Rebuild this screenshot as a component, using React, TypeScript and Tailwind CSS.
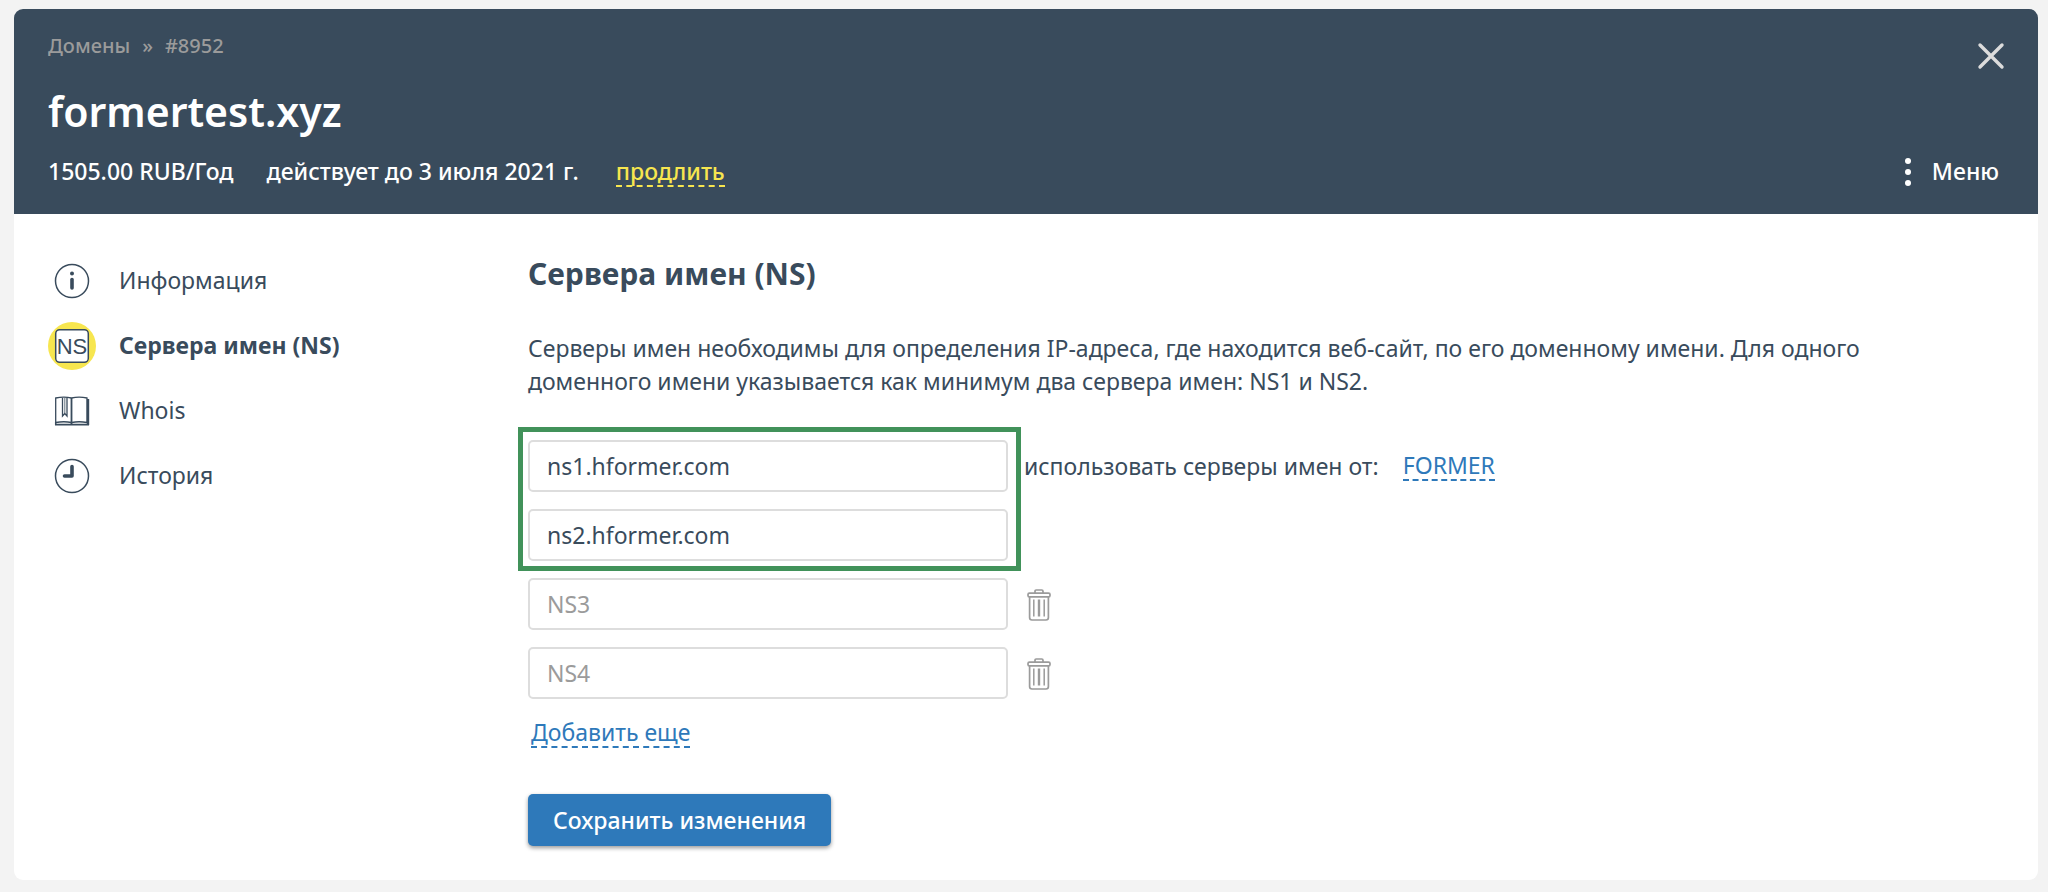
import type { ReactNode } from 'react';

const InfoIcon = () => (
  <svg className="w-9 h-9" viewBox="0 0 36 36" fill="none" stroke="currentColor">
    <circle cx="18" cy="18" r="16.5" strokeWidth="1.5" />
    <circle cx="18" cy="10.5" r="2" fill="currentColor" stroke="none" />
    <path d="M18 16.5v8.5" strokeWidth="3.6" strokeLinecap="round" />
  </svg>
);

const NsIcon = () => (
  <svg className="w-12 h-12" viewBox="0 0 48 48">
    <circle cx="24" cy="24" r="24" fill="#f7e64f" />
    <rect x="7.7" y="7.7" width="32.6" height="32.6" rx="4" fill="#fff" stroke="currentColor" strokeWidth="1.5" />
    <text
      x="24"
      y="32"
      textAnchor="middle"
      fontSize="22"
      fontWeight="400"
      fill="currentColor"
      fontFamily="Liberation Sans, sans-serif"
    >
      NS
    </text>
  </svg>
);

const BookIcon = () => (
  <svg className="w-9 h-9" viewBox="0 0 36 36" fill="none" stroke="currentColor" strokeWidth="1.3">
    <path d="M1.7 5Q10 3.2 17.5 5Q25 3.2 33 5V29.5Q25 28 17.5 29.5Q10 28 1.7 29.5Z" />
    <path d="M17.5 5V31" strokeWidth="1.8" />
    <path d="M1 31.6H35" strokeWidth="1.6" />
    <path d="M1.7 29V32" strokeWidth="1.5" />
    <path d="M34 6V32" strokeWidth="2.4" />
    <path d="M8.5 5V23L10.8 20.5L13 23V5" />
    <path d="M10.8 5V20" strokeWidth="0.8" />
  </svg>
);

const ClockIcon = () => (
  <svg className="w-9 h-9" viewBox="0 0 36 36" fill="none" stroke="currentColor">
    <circle cx="18" cy="18" r="16.5" strokeWidth="1.5" />
    <path d="M18 8.5V18H10.5" strokeWidth="3.6" strokeLinecap="round" strokeLinejoin="round" />
  </svg>
);

const TrashIcon = () => (
  <svg className="w-6 h-8" viewBox="0 0 24 32" fill="none" stroke="currentColor" strokeWidth="1.7">
    <path d="M8 4V2.2Q8 1 9.2 1H14.8Q16 1 16 2.2V4" />
    <rect x="1" y="4.2" width="22" height="3.6" rx="1.4" />
    <path d="M2.6 8V28.6Q2.6 31 5 31H19Q21.4 31 21.4 28.6V8" />
    <path d="M6.8 10.5V27.5M17.2 10.5V27.5" strokeWidth="1.5" />
    <path d="M12 10.5V27.5" strokeWidth="2.4" />
  </svg>
);

const menuItems: { label: string; icon: ReactNode; active?: boolean }[] = [
  { label: 'Информация', icon: <InfoIcon /> },
  { label: 'Сервера имен (NS)', icon: <NsIcon />, active: true },
  { label: 'Whois', icon: <BookIcon /> },
  { label: 'История', icon: <ClockIcon /> },
];

const NsInput = ({ id, value }: { id: string; value?: string }) => (
  <input
    type="text"
    aria-label={id}
    placeholder={id}
    defaultValue={value}
    className="block w-[480px] h-[52px] px-[17px] pb-px rounded-[5px] border-2 border-[#dddddd] bg-white text-[#394b5c] placeholder:text-[#9b9b9b] outline-none"
  />
);

const App = () => {
  return (
    <div className="min-h-screen bg-[#f3f3f3] pl-[14px] pr-[10px] pt-[9px] pb-3 font-['Noto_Sans','Open_Sans',sans-serif] text-[23px] leading-[33px] text-[#394b5c]">
      <div className="rounded-[9px] bg-white overflow-hidden">
        <header className="bg-[#394b5c] text-white pl-[34px] pr-[33px] pt-5 pb-[26px]">
          <div className="flex justify-between items-start">
            <div>
              <nav className="flex gap-3 text-xl leading-[34px] font-medium text-[#9b9b9b]">
                <a href="#domains">Домены</a>
                <span>»</span>
                <span>#8952</span>
              </nav>
              <h1 className="mt-4 text-[41px] leading-[64px] font-semibold">formertest.xyz</h1>
            </div>
            <button aria-label="Закрыть" className="mt-[13px] text-[#dcdcdc]">
              <svg className="w-7 h-7" viewBox="0 0 28 28" stroke="currentColor" strokeWidth="3.4" strokeLinecap="round">
                <path d="M3 3L25 25M25 3L3 25" />
              </svg>
            </button>
          </div>

          <div className="mt-3 flex justify-between items-center font-medium">
            <div className="flex items-center">
              <span>1505.00 RUB/Год</span>
              <span className="ml-[33px]">действует до 3 июля 2021 г.</span>
              <a href="#renew" className="ml-[37px] leading-[28px] border-b-2 border-dashed border-[#f7e64f] text-[#f7e64f]">
                продлить
              </a>
            </div>
            <button className="flex items-center gap-5 pr-[6px]">
              <svg className="w-2 h-7" viewBox="0 0 8 28" fill="currentColor">
                <circle cx="4" cy="3" r="3" />
                <circle cx="4" cy="14" r="3" />
                <circle cx="4" cy="25" r="3" />
              </svg>
              Меню
            </button>
          </div>
        </header>

        <div className="flex pl-[34px] pr-[33px] pt-[34px] pb-[34px]">
          <nav className="w-[480px] shrink-0">
            <ul>
              {menuItems.map((item) => (
                <li key={item.label} className="h-[65px]">
                  <a
                    href="#section"
                    className={item.active ? 'flex items-center h-full gap-[23px] font-bold' : 'flex items-center h-full gap-[23px]'}
                  >
                    <span className="w-12 flex justify-center">{item.icon}</span>
                    <span className="pb-px">{item.label}</span>
                  </a>
                </li>
              ))}
            </ul>
          </nav>

          <main className="flex-1">
            <h2 className="mt-2 text-[30px] leading-[36px] font-bold">Сервера имен (NS)</h2>
            <p className="mt-[40px] pr-[100px]">
              Серверы имен необходимы для определения IP-адреса, где находится веб-сайт, по его доменному имени. Для
              одного доменного имени указывается как минимум два сервера имен: NS1 и NS2.
            </p>

            <form className="mt-[42px]">
              <div className="flex items-start gap-4">
                <div className="relative flex flex-col gap-[17px]">
                  <div className="absolute -left-[10px] -right-[13px] -top-[13px] -bottom-[10px] border-[5px] border-[#41925a] pointer-events-none" />
                  <NsInput id="NS1" value="ns1.hformer.com" />
                  <NsInput id="NS2" value="ns2.hformer.com" />
                </div>
                <div className="flex items-center h-[52px] gap-6">
                  <span>использовать серверы имен от:</span>
                  <a href="#former" className="leading-[28px] border-b-2 border-dashed border-[#2e79ba] text-[#2e79ba]">
                    FORMER
                  </a>
                </div>
              </div>

              {['NS3', 'NS4'].map((id) => (
                <div key={id} className="mt-[17px] flex items-center gap-[19px]">
                  <NsInput id={id} />
                  <button type="button" aria-label={`Удалить ${id}`} className="pt-[2px] text-[#9b9b9b]">
                    <TrashIcon />
                  </button>
                </div>
              ))}

              <button
                type="button"
                className="block mt-[19px] ml-[3px] leading-[28px] border-b-2 border-dashed border-[#2e79ba] text-[#2e79ba]"
              >
                Добавить еще
              </button>

              <button
                type="submit"
                className="block mt-[46px] h-[52px] px-[25px] rounded-[5px] bg-[#2e79ba] text-white font-medium shadow-[0_2px_4px_rgba(0,0,0,0.4)]"
              >
                Сохранить изменения
              </button>
            </form>
          </main>
        </div>
      </div>
    </div>
  );
};

export default App;
